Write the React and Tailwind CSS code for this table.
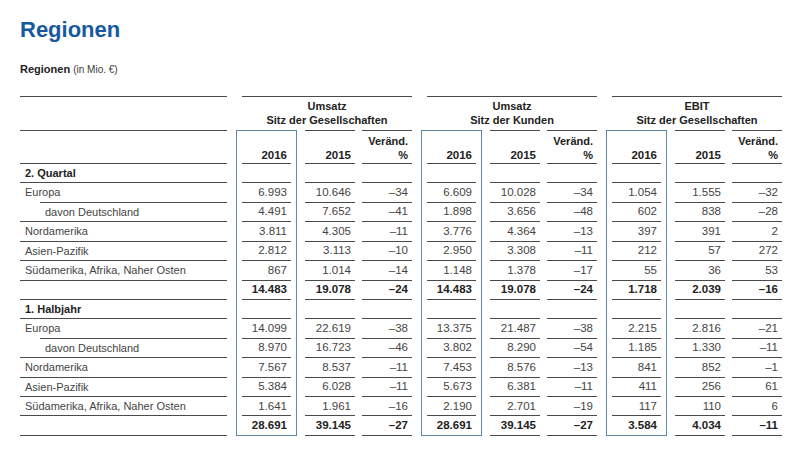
import React from "react";

const LINE = "bg-[#4a4a4a]";

// Zeilen: [Bezeichnung, typ, werte je Gruppe]
const q2 = [
  ["Europa", "sub", [["6.993", "10.646", "–34"], ["6.609", "10.028", "–34"], ["1.054", "1.555", "–32"]]],
  ["davon Deutschland", "indent", [["4.491", "7.652", "–41"], ["1.898", "3.656", "–48"], ["602", "838", "–28"]]],
  ["Nordamerika", "row", [["3.811", "4.305", "–11"], ["3.776", "4.364", "–13"], ["397", "391", "2"]]],
  ["Asien-Pazifik", "row", [["2.812", "3.113", "–10"], ["2.950", "3.308", "–11"], ["212", "57", "272"]]],
  ["Südamerika, Afrika, Naher Osten", "row", [["867", "1.014", "–14"], ["1.148", "1.378", "–17"], ["55", "36", "53"]]],
  ["", "total", [["14.483", "19.078", "–24"], ["14.483", "19.078", "–24"], ["1.718", "2.039", "–16"]]],
];

const h1 = [
  ["Europa", "sub", [["14.099", "22.619", "–38"], ["13.375", "21.487", "–38"], ["2.215", "2.816", "–21"]]],
  ["davon Deutschland", "indent", [["8.970", "16.723", "–46"], ["3.802", "8.290", "–54"], ["1.185", "1.330", "–11"]]],
  ["Nordamerika", "row", [["7.567", "8.537", "–11"], ["7.453", "8.576", "–13"], ["841", "852", "–1"]]],
  ["Asien-Pazifik", "row", [["5.384", "6.028", "–11"], ["5.673", "6.381", "–11"], ["411", "256", "61"]]],
  ["Südamerika, Afrika, Naher Osten", "row", [["1.641", "1.961", "–16"], ["2.190", "2.701", "–19"], ["117", "110", "6"]]],
  ["", "total", [["28.691", "39.145", "–27"], ["28.691", "39.145", "–27"], ["3.584", "4.034", "–11"]]],
];

const groups = [
  ["Umsatz", "Sitz der Gesellschaften"],
  ["Umsatz", "Sitz der Kunden"],
  ["EBIT", "Sitz der Gesellschaften"],
];

function Num({ children, bold, last }) {
  return (
    <div
      className={`h-full flex items-center justify-end pr-[4px] text-[11.5px] ${
        bold ? "font-bold text-[#222]" : "text-[#444]"
      } ${last ? "" : "border-b border-[#4a4a4a]"}`}
    >
      {children}
    </div>
  );
}

function DataRow({ label, kind, values, last }) {
  const bold = kind === "total" || kind === "section";
  return (
    <div className="flex h-[19.43px]">
      <div className="w-[207px] flex flex-col">
        <div
          className={`flex-1 flex items-center text-[11px] ${
            kind === "indent" ? "pl-[25px]" : "pl-[5px]"
          } ${bold ? "font-bold text-[#222]" : "text-[#444]"}`}
        >
          {label}
        </div>
        <div className={`h-px ${LINE} ${kind === "sub" ? "ml-[20px]" : ""}`} />
      </div>
      {values.map((v, gi) => (
        <div key={gi} className="flex ml-[9px]">
          <div
            className={`w-[61px] px-[5px] border-x border-[#5e8aa8] ${
              last ? "border-b" : ""
            }`}
          >
            <Num bold={bold} last={last}>
              {v[0]}
            </Num>
          </div>
          <div className="w-[50px] ml-[8px]">
            <Num bold={bold}>{v[1]}</Num>
          </div>
          <div className="w-[50px] ml-[7px]">
            <Num bold={bold}>{v[2]}</Num>
          </div>
        </div>
      ))}
    </div>
  );
}

function SectionRow({ label }) {
  return (
    <DataRow label={label} kind="section" values={[["", "", ""], ["", "", ""], ["", "", ""]]} />
  );
}

export default function App() {
  return (
    <div
      className="w-[800px] h-[466px] bg-white pl-[20px] overflow-hidden"
      style={{ fontFamily: '"Liberation Sans", Arial, sans-serif' }}
    >
      <h1 className="mt-[19px] h-[22px] text-[22px] leading-none font-bold text-[#17599f]">
        Regionen
      </h1>
      <div className="mt-[23px] leading-none text-[11px] text-[#222]">
        <span className="font-bold">Regionen</span>{" "}
        <span className="text-[10px] text-[#3c3c3c]">(in Mio. €)</span>
      </div>

      <div className="mt-[21px]">
        {/* Kopfzeile 1 */}
        <div className="flex h-[34px]">
          <div className="w-[207px] border-t border-[#4a4a4a]" />
          {groups.map((g, i) => (
            <div
              key={i}
              className="w-[170px] ml-[15px] border-t border-[#4a4a4a] pt-[2px] text-center text-[11px] font-bold text-[#222] leading-[14px]"
            >
              <div>{g[0]}</div>
              <div>{g[1]}</div>
            </div>
          ))}
        </div>

        {/* Kopfzeile 2 */}
        <div className="flex h-[34px]">
          <div className="w-[207px] border-y border-[#4a4a4a]" />
          {groups.map((g, i) => (
            <div key={i} className="flex ml-[9px]">
              <div className="w-[61px] px-[5px] border-x border-t border-[#5e8aa8]">
                <div className="h-full border-b border-[#4a4a4a] flex items-end justify-end pr-[4px] pb-[1px] text-[11.5px] font-bold text-[#222] leading-[14px]">
                  2016
                </div>
              </div>
              <div className="w-[50px] ml-[8px] border-y border-[#4a4a4a] flex items-end justify-end pr-[4px] pb-[1px] text-[11.5px] font-bold text-[#222] leading-[14px]">
                2015
              </div>
              <div className="w-[50px] ml-[7px] border-y border-[#4a4a4a] flex flex-col items-end justify-end pr-[4px] pb-[1px] text-[11px] font-bold text-[#222] leading-[14px]">
                <div>Veränd.</div>
                <div>%</div>
              </div>
            </div>
          ))}
        </div>

        <SectionRow label="2. Quartal" />
        {q2.map((r, i) => (
          <DataRow key={"q" + i} label={r[0]} kind={r[1]} values={r[2]} />
        ))}
        <SectionRow label="1. Halbjahr" />
        {h1.map((r, i) => (
          <DataRow
            key={"h" + i}
            label={r[0]}
            kind={r[1]}
            values={r[2]}
            last={i === h1.length - 1}
          />
        ))}
      </div>
    </div>
  );
}
